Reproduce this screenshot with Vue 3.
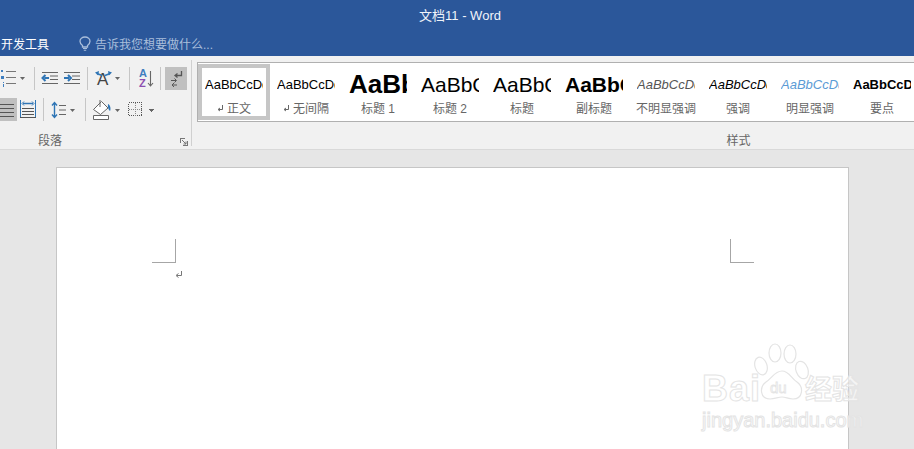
<template>
  <div class="word">
    <div class="title-bar">文档11 - Word</div>
    <div class="tab-bar">
      <span class="tab">开发工具</span>
      <svg class="bulb" width="12" height="15" viewBox="0 0 12 15">
        <path d="M3.5 9.5C2 8.3 1 7 1 5.2 1 2.8 3.2 1 6 1s5 1.8 5 4.2c0 1.800-1 3.100-2.500 4.300v1.500h-5z" fill="none" stroke="#a9bedb" stroke-width="1.300" />
        <path d="M4 12.500h4M4.800 14.300h2.400" stroke="#a9bedb" stroke-width="1.100" />
      </svg>
      <span class="tell-me">告诉我您想要做什么...</span>
    </div>

    <div class="ribbon">
      <div class="para-group">
        <div class="tool-row">
          <svg width="34" height="23" viewBox="0 0 34 23">
            <path d="M6 4.500h10M6 10.500h10M6 16.500h10" stroke="#777" />
            <path d="M1 3h2v2H1zM1 9h3v3H1zM3 15h1v1H3zM3 17h1v3H3z" fill="#3f7ebf" />
            <polygon points="20,10 25,10 22.500,13" fill="#666" />
          </svg>
          <i class="sep"></i>
          <svg width="26" height="23" viewBox="0 0 26 23">
            <path d="M7 5.500h16M15 9h8M15 12.500h8M7 16.500h16" stroke="#666" />
            <path d="M14 11H9.500M10.500 8 7.500 11l3 3" fill="none" stroke="#2f75b5" stroke-width="2" />
          </svg>
          <svg width="26" height="23" viewBox="0 0 26 23">
            <path d="M3 5.500h16M11 9h8M11 12.500h8M3 16.500h16" stroke="#666" />
            <path d="M3 11h5M7 8l3 3-3 3" fill="none" stroke="#2f75b5" stroke-width="2" />
          </svg>
          <i class="sep"></i>
          <svg width="41" height="23" viewBox="0 0 41 23">
            <text x="9" y="18" class="svg-a" fill="#444">A</text>
            <path d="M9 6.500l5 2M22 6.500l-5 2" stroke="#2f75b5" stroke-width="1.400" />
            <path d="M7 5.500l4-1.500-.8 4.500zM24 5.500l-4-1.500.8 4.500z" fill="#2f75b5" />
            <polygon points="27,10 32,10 29.500,13" fill="#666" />
          </svg>
          <i class="sep"></i>
          <svg width="30" height="23" viewBox="0 0 30 23">
            <text x="9" y="10" class="svg-az" fill="#3f7ebf">A</text>
            <text x="9" y="20" class="svg-az" fill="#8d4fb0">Z</text>
            <path d="M20.500 4v15M18 16l2.500 3 2.500-3" fill="none" stroke="#666" stroke-width="1.100" />
          </svg>
          <i class="sep"></i>
          <div class="pilcrow-btn">
            <svg width="22" height="23" viewBox="0 0 22 23">
              <path d="M16.500 4v4.500h-6M12.500 6.500l-2.500 2 2.500 2" fill="none" stroke="#555" stroke-width="1.300" />
              <path d="M6 13.500h5M9.500 11.500l2 2-2 2M7 18h5M9 16l-2 2 2 2" fill="none" stroke="#555" />
            </svg>
          </div>
        </div>

        <div class="tool-row row-two">
          <div class="justify-btn">
            <svg width="17" height="23" viewBox="0 0 17 23">
              <path d="M0 6.500h14M0 10.500h14M0 14.500h14M0 18.500h14" stroke="#555" />
            </svg>
          </div>
          <svg width="26" height="23" viewBox="0 0 26 23">
            <path d="M3.500 2v17M18.500 2v17" stroke="#2f75b5" />
            <path d="M6 5.500h10" stroke="#2f75b5" stroke-width="1.500" />
            <path d="M7 3.500 5 5.500l2 2M15 3.500l2 2-2 2" fill="none" stroke="#2f75b5" />
            <path d="M5 10.500h12M5 13.500h12M5 16.500h12M3 19.500h16" stroke="#555" />
          </svg>
          <i class="sep"></i>
          <svg width="41" height="23" viewBox="0 0 41 23">
            <path d="M10.500 5v14M8 7.500l2.500-3 2.500 3M8 16.500l2.500 3 2.500-3" fill="none" stroke="#2f75b5" stroke-width="1.400" />
            <path d="M15 7.500h7M15 12h7M15 16.500h7" stroke="#666" />
            <polygon points="26,11 31,11 28.500,14" fill="#666" />
          </svg>
          <i class="sep"></i>
          <svg width="36" height="24" viewBox="0 0 36 24">
            <path d="M7.500 11.500l8-8 6.500 6.500-7.500 6.500z" fill="#fff" stroke="#666" />
            <path d="M14 2v7" stroke="#666" />
            <path d="M22 6c2.500 1 3 5 2 7-1.500-1-2.500-4-2-7z" fill="#2f75b5" />
            <path d="M7.500 17.500h15v4h-15z" fill="#fff" stroke="#666" />
            <polygon points="29,11 34,11 31.500,14" fill="#666" />
          </svg>
          <svg width="38" height="24" viewBox="0 0 38 24" shape-rendering="crispEdges">
            <rect x="6.500" y="4.500" width="13" height="13" fill="none" stroke="#555" stroke-dasharray="1 1" />
            <path d="M13 4.500v13M6.500 11h13" stroke="#888" stroke-dasharray="1 1" />
            <polygon points="27,11 32,11 29.500,14" fill="#666" />
          </svg>
        </div>

        <div class="group-label para-label">
          <span>段落</span>
          <svg class="launcher" width="8" height="8" viewBox="0 0 8 8">
            <path d="M0 .5h5M.5 0v5M7.500 3v5M3 7.500h5M2 2l4 4M6 3.500V6H3.500" fill="none" stroke="#777" />
          </svg>
        </div>
      </div>

      <i class="group-sep"></i>

      <div class="styles-group">
        <div class="gallery">
          <div v-for="item in styles" :key="item.name" class="style-item" :class="{ selected: item.selected }">
            <div class="preview" :class="item.cls">{{ item.sample }}</div>
            <div class="style-name">
              <svg v-if="item.mark" class="mark" width="7" height="7" viewBox="0 0 7 7">
                <path d="M5.500 0v4.500H1.500M3 3 1 4.500 3 6" fill="none" stroke="#666" />
              </svg>
              {{ item.name }}
            </div>
          </div>
        </div>
        <div class="group-label styles-label">样式</div>
      </div>
    </div>

    <div class="doc-area">
      <div class="page">
        <div class="corners">
          <i class="corner corner-left"></i>
          <i class="corner corner-right"></i>
        </div>
        <svg class="para-mark" width="8" height="8" viewBox="0 0 8 8">
          <path d="M6.500 0v4.500H2M3.500 2.500 1 4.500l2.500 2" fill="none" stroke="#777" />
        </svg>
      </div>
    </div>

    <div class="watermark">
      <div class="wm-top">
        <span class="wm-bai">Bai</span>
        <svg class="wm-paw" width="58" height="64" viewBox="0 0 58 64">
          <g fill="rgba(255,255,255,.5)" stroke="#e4e4e4" stroke-width="1.200">
            <ellipse cx="8" cy="23" rx="6" ry="9" transform="rotate(-18 8 23)" />
            <ellipse cx="22" cy="10" rx="6" ry="9" />
            <ellipse cx="37" cy="11" rx="6" ry="9" />
            <ellipse cx="49" cy="27" rx="6" ry="9" transform="rotate(-20 49 27)" />
            <path d="M29 28c7 0 9 7 15 11 7 5 6 17-4 17-5 0-7-2-11-2s-7 2-12 2C7 56 6 44 13 39c6-4 9-11 16-11z" />
          </g>
          <text x="17" y="50" class="wm-du">du</text>
        </svg>
        <span class="wm-cn">经验</span>
      </div>
      <div class="wm-url">jingyan.baidu.com</div>
    </div>
  </div>
</template>

<script setup>
const sample = 'AaBbCcDd'

// 样式库里的条目
const styles = [
  { name: '正文', sample, cls: 'normal', mark: true, selected: true },
  { name: '无间隔', sample, cls: 'normal', mark: true },
  { name: '标题 1', sample, cls: 'h1' },
  { name: '标题 2', sample, cls: 'h2' },
  { name: '标题', sample, cls: 'h2' },
  { name: '副标题', sample, cls: 'sub' },
  { name: '不明显强调', sample, cls: 'em-grey' },
  { name: '强调', sample, cls: 'em' },
  { name: '明显强调', sample, cls: 'em-blue' },
  { name: '要点', sample, cls: 'strong' }
]
</script>

<style>
html,
body {
  margin: 0;
  height: 100%;
  overflow: hidden;
}
</style>

<style scoped>
.word {
  position: relative;
  width: 914px;
  height: 449px;
  overflow: hidden;
  background-color: #e6e6e6;
  font-family: "Liberation Sans", "Noto Sans CJK SC", sans-serif;
}

.title-bar {
  height: 30px;
  line-height: 31px;
  text-align: center;
  font-size: 13px;
  color: #f0f4fa;
  background-color: #2b579a;
  padding-left: 6px;
  box-sizing: border-box;
}

.tab-bar {
  display: flex;
  align-items: center;
  height: 26px;
  background-color: #2b579a;
  font-size: 12px;
}

.tab {
  width: 79px;
  padding-left: 1px;
  box-sizing: border-box;
  color: #fff;
}

.bulb {
  margin-right: 4px;
}

.tell-me {
  color: #a9bedb;
}

.ribbon {
  display: flex;
  height: 94px;
  box-sizing: border-box;
  background-color: #f1f1f1;
  border-bottom: 1px solid #d9d9d9;
}

.para-group {
  width: 191px;
  flex-shrink: 0;
  padding-top: 11px;
  box-sizing: border-box;
}

.tool-row {
  display: flex;
  height: 23px;
}

.row-two {
  margin-top: 8px;
}

.tool-row svg {
  flex-shrink: 0;
  display: block;
}

.sep {
  width: 1px;
  height: 23px;
  background-color: #c6c6c6;
  flex-shrink: 0;
}

.pilcrow-btn {
  margin-left: 4px;
  background-color: #c0c0c0;
}

.justify-btn {
  background-color: #c0c0c0;
}

.group-label {
  font-size: 12px;
  line-height: 16px;
  color: #666;
  text-align: center;
}

.para-label {
  position: relative;
  margin-top: 12px;
  width: 100px;
}

.launcher {
  position: absolute;
  left: 180px;
  top: 5px;
}

.group-sep {
  width: 1px;
  height: 86px;
  margin-top: 4px;
  background-color: #d0d0d0;
  flex-shrink: 0;
}

.styles-group {
  width: 1088px;
  flex-shrink: 0;
  padding: 6px 0 0 5px;
  box-sizing: border-box;
}

.gallery {
  display: flex;
  height: 60px;
  box-sizing: border-box;
  padding-top: 1px;
  background-color: #fff;
  border: 1px solid #b0b0b0;
}

.styles-label {
  margin-top: 11px;
}

.style-item {
  width: 72px;
  height: 56px;
  flex-shrink: 0;
  box-sizing: border-box;
  padding: 4px 7px 0;
}

.style-item.selected {
  border: 4px solid #c6c6c6;
  padding: 0 3px;
}

.preview {
  height: 29px;
  line-height: 33px;
  overflow: hidden;
  white-space: nowrap;
  color: #000;
}

.style-name {
  display: flex;
  align-items: center;
  justify-content: center;
  gap: 3px;
  height: 20px;
  font-size: 12px;
  color: #666;
  white-space: nowrap;
}

.mark {
  margin-top: 3px;
}

.normal {
  font-size: 13px;
}

.h1 {
  font-size: 26px;
  font-weight: bold;
}

.h2 {
  font-size: 21px;
}

.sub {
  font-size: 21px;
  font-weight: bold;
}

.em-grey {
  font-size: 13px;
  font-style: italic;
  color: #555;
}

.em {
  font-size: 13px;
  font-style: italic;
}

.em-blue {
  font-size: 13px;
  font-style: italic;
  color: #5b9bd5;
}

.strong {
  font-size: 13px;
  font-weight: bold;
}

.svg-a {
  font-size: 17px;
  font-family: "Liberation Sans", sans-serif;
}

.svg-az {
  font-size: 11px;
  font-weight: bold;
  font-family: "Liberation Sans", sans-serif;
}

.doc-area {
  padding: 17px 0 0 56px;
}

.page {
  width: 793px;
  height: 400px;
  box-sizing: border-box;
  padding: 71px 94px 0 95px;
  background-color: #fff;
  border: 1px solid #c6c6c6;
}

.corners {
  display: flex;
  justify-content: space-between;
}

.corner {
  width: 23px;
  height: 23px;
  border-bottom: 1px solid #a6a6a6;
}

.corner-left {
  border-right: 1px solid #a6a6a6;
}

.corner-right {
  border-left: 1px solid #a6a6a6;
}

.para-mark {
  display: block;
  margin: 8px 0 0 23px;
}

.watermark {
  position: absolute;
  left: 702px;
  top: 351px;
  width: 170px;
}

.wm-top {
  display: flex;
  align-items: flex-end;
  height: 56px;
}

.wm-bai,
.wm-cn,
.wm-url {
  color: rgba(255, 255, 255, 0.6);
  -webkit-text-stroke: 1px #e4e4e4;
}

.wm-bai {
  font-size: 36px;
  line-height: 36px;
  font-weight: bold;
  letter-spacing: 1px;
}

.wm-paw {
  margin: 0 -6px 0 -8px;
  flex-shrink: 0;
}

.wm-du {
  font-size: 15px;
  fill: none;
  stroke: #e4e4e4;
  stroke-width: 0.8;
}

.wm-cn {
  font-size: 27px;
  line-height: 34px;
  font-weight: bold;
}

.wm-url {
  margin-top: 1px;
  font-size: 20px;
  line-height: 24px;
  white-space: nowrap;
}
</style>
